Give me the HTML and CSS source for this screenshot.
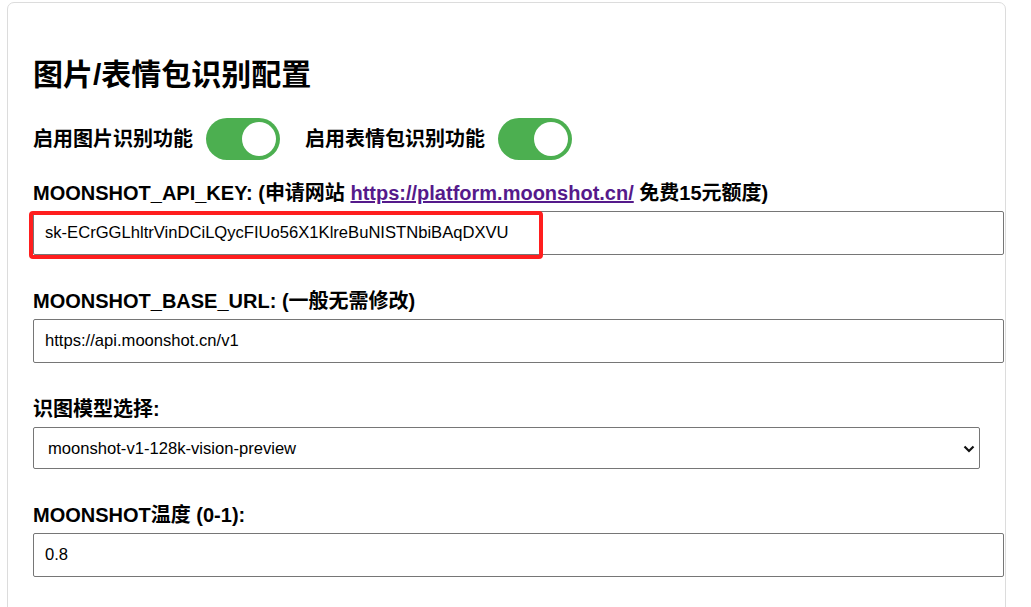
FILE: index.html
```html
<!DOCTYPE html>
<html lang="zh-CN">
<head>
<meta charset="utf-8">
<title>图片/表情包识别配置</title>
<link rel="stylesheet" href="styles.css">
</head>
<body>
<div class="card">
  <h1 class="title">图片/表情包识别配置</h1>

  <div class="toggle-row">
    <div class="toggle-item">
      <span class="toggle-label">启用图片识别功能</span>
      <span class="switch on"><span class="knob"></span></span>
    </div>
    <div class="toggle-item">
      <span class="toggle-label">启用表情包识别功能</span>
      <span class="switch on"><span class="knob"></span></span>
    </div>
  </div>

  <div class="form-group">
    <label class="field-label">MOONSHOT_API_KEY: (申请网站 <a class="link" href="#">https://platform.moonshot.cn/</a> 免费15元额度)</label>
    <div class="input-wrap">
      <input class="text-input" type="text" value="sk-ECrGGLhltrVinDCiLQycFIUo56X1KlreBuNISTNbiBAqDXVU">
      <span class="highlight"></span>
    </div>
  </div>

  <div class="form-group">
    <label class="field-label">MOONSHOT_BASE_URL: (一般无需修改)</label>
    <input class="text-input" type="text" value="https://api.moonshot.cn/v1">
  </div>

  <div class="form-group">
    <label class="field-label">识图模型选择:</label>
    <div class="select-wrap">
      <select class="select">
        <option>moonshot-v1-128k-vision-preview</option>
      </select>
      <svg class="chevron" width="12" height="8" viewBox="0 0 12 8"><path d="M1.5 1.5 L6 6 L10.5 1.5" fill="none" stroke="#111" stroke-width="2.2"/></svg>
    </div>
  </div>

  <div class="form-group">
    <label class="field-label">MOONSHOT温度 (0-1):</label>
    <input class="text-input" type="text" value="0.8">
  </div>
</div>
</body>
</html>
```

FILE: styles.css
```css
html, body {
  margin: 0;
  padding: 0;
  background: #fff;
}

body {
  font-family: "Liberation Sans", Arial, "Noto Sans CJK SC", sans-serif;
  color: #000;
}

.card {
  box-sizing: border-box;
  width: 999px;
  margin: 2px 0 0 7px;
  padding: 25px 25px 40px 25px;
  border: 1px solid #dcdcdc;
  border-radius: 7px;
  background: #fff;
}

.title {
  margin: 27px 0 23px 0;
  font-size: 30px;
  line-height: 40px;
  font-weight: bold;
  font-family: "Liberation Sans", Arial, "Noto Sans CJK SC", sans-serif;
}

.toggle-row {
  display: flex;
  align-items: center;
  gap: 25px;
  margin-bottom: 22px;
}

.toggle-item {
  display: flex;
  align-items: center;
  gap: 13px;
}

.toggle-label {
  font-size: 20px;
  font-weight: bold;
  line-height: 23px;
}

.switch {
  position: relative;
  display: inline-block;
  width: 74px;
  height: 42px;
  border-radius: 21px;
  background: #4caf50;
}

.switch .knob {
  position: absolute;
  top: 4px;
  right: 4px;
  width: 34px;
  height: 34px;
  border-radius: 50%;
  background: #fff;
}

.form-group {
  margin-bottom: 35px;
}

.field-label {
  display: block;
  font-size: 20px;
  font-weight: bold;
  line-height: 23px;
  margin-bottom: 6px;
}

.link {
  color: #551a8b;
  text-decoration: underline;
}

.input-wrap {
  position: relative;
}

.text-input {
  display: block;
  width: 100%;
  margin: 0;
  padding: 11px;
  border: 1px solid #767676;
  border-radius: 2px;
  font-family: "Liberation Sans", Arial, sans-serif;
  font-size: 16.6px;
  line-height: 20px;
  color: #000;
  background: #fff;
  box-sizing: content-box;
  height: 20px;
}

.highlight {
  position: absolute;
  left: -4px;
  top: 0;
  width: 506px;
  height: 40px;
  border: 4px solid #ff1e1e;
  border-radius: 4px;
  pointer-events: none;
}

.select-wrap {
  position: relative;
  width: 100%;
  margin-bottom: 1px;
}

.select {
  display: block;
  width: 100%;
  height: 42px;
  margin: 0;
  padding: 0 30px 0 14px;
  border: 1px solid #767676;
  border-radius: 2px;
  box-sizing: border-box;
  font-family: "Liberation Sans", Arial, sans-serif;
  font-size: 16.6px;
  color: #000;
  background: #fff;
  -webkit-appearance: none;
  appearance: none;
}

.chevron {
  position: absolute;
  right: 5px;
  top: 18px;
  pointer-events: none;
}
```
